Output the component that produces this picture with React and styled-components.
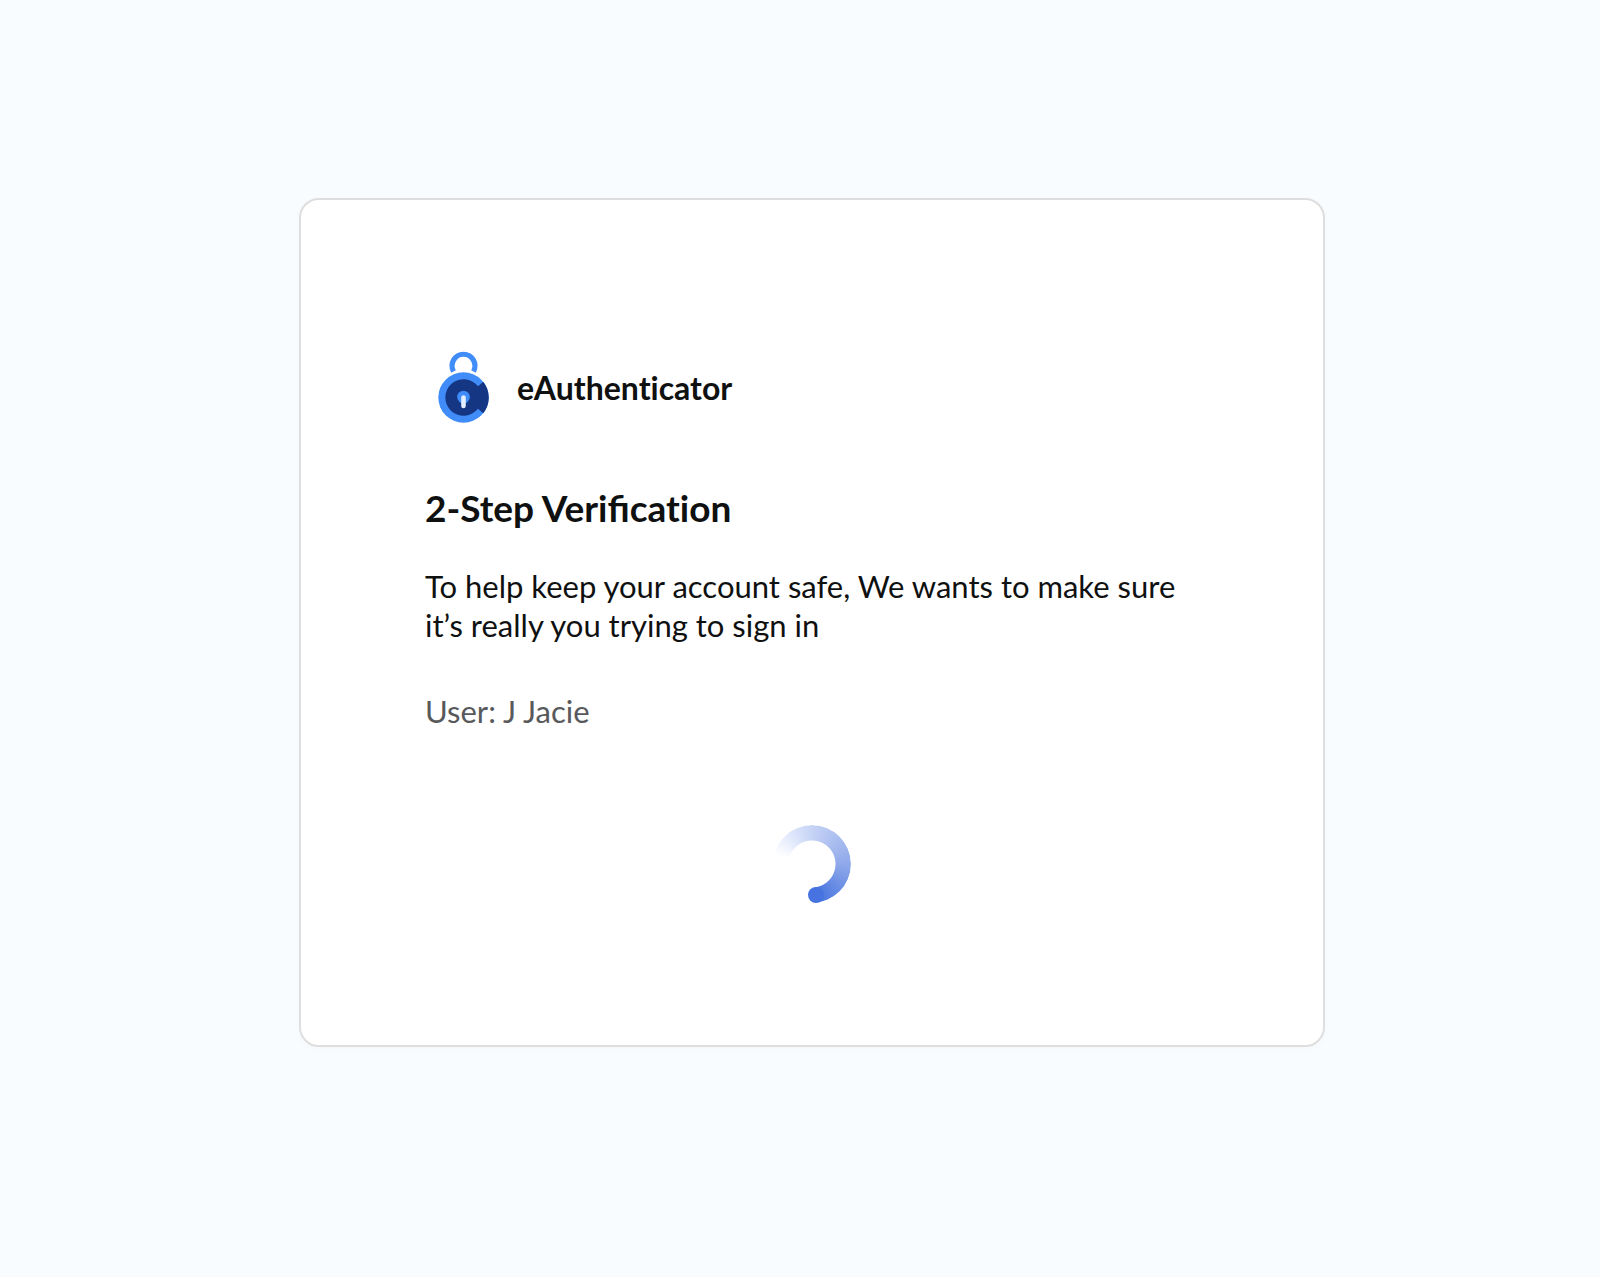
import React from "react";
import styled, { createGlobalStyle } from "styled-components";

const GlobalStyle = createGlobalStyle`
  *, *::before, *::after { box-sizing: border-box; }
  body {
    margin: 0;
    background: #f9fcff;
    font-family: Lato, "Open Sans", sans-serif;
    color: #0f1111;
  }
  h1, p { margin: 0; }
`;

const Page = styled.div`
  display: grid;
  grid-template-columns: 299fr minmax(0, 1026px) 275fr;
  padding: 198px 0;
`;

const Card = styled.main`
  grid-column: 2;
  padding: 144px 124px 142px;
  background: #fff;
  border: 2px solid #dedede;
  border-radius: 20px;
  box-shadow: 0 2px 8px rgba(0, 0, 0, 0.02);
`;

const Brand = styled.header`
  display: flex;
  align-items: center;
  gap: 16px;
  height: 88px;
`;

const BrandMark = styled.svg`
  display: block;
  width: 76px;
  height: 88px;
`;

const BrandName = styled.span`
  font-size: 32px;
  line-height: 38px;
  font-weight: 700;
  font-variant-ligatures: none;
`;

const Title = styled.h1`
  margin-top: 53px;
  font-size: 37px;
  line-height: 46px;
  font-weight: 700;
`;

const Unligated = styled.span`
  font-variant-ligatures: none;
`;

const Text = styled.p`
  margin-top: ${(p) => (p.$muted ? "47px" : "36px")};
  font-size: 31px;
  line-height: 39px;
  color: ${(p) => (p.$muted ? "#58595b" : "#0f1111")};
`;

const Spinner = styled.div`
  position: relative;
  width: 78px;
  height: 78px;
  margin: 94px auto 0;

  &::before {
    content: "";
    display: block;
    height: 100%;
    border-radius: 50%;
    background: conic-gradient(
      from 284deg,
      rgba(68, 114, 222, 0) 0deg,
      #dbe4fa 45deg,
      #c6d3f5 76deg,
      #8fa9ea 166deg,
      #4673df 248deg,
      transparent 248deg
    );
    mask: radial-gradient(circle, transparent 23px, #000 24px);
  }

  &::after {
    content: "";
    position: absolute;
    left: 35px;
    bottom: 0;
    width: 16px;
    height: 16px;
    border-radius: 50%;
    background: #4673df;
  }
`;

function LockMark() {
  return (
    <BrandMark viewBox="0 0 76 88" aria-hidden="true">
      <path d="M28.5 27.4A11.4 11.6 0 1 1 48.5 27.4" fill="none" stroke="#408cf9" strokeWidth="5.2" />
      <circle cx="38.5" cy="53.5" r="25.2" fill="#408cf9" />
      <path
        d="M58.2 37.7A25.2 25.2 0 0 1 58.2 69.3L53 64.8A18.3 18.3 0 1 1 53 42.2Z"
        fill="#153783"
      />
      <circle cx="38.5" cy="53" r="6.3" fill="#408cf9" />
      <path d="M38.5 53.5V62" stroke="#e3efff" strokeWidth="4.6" strokeLinecap="round" />
    </BrandMark>
  );
}

export default function App() {
  return (
    <>
      <GlobalStyle />
      <Page>
        <Card>
          <Brand>
            <LockMark />
            <BrandName>eAuthenticator</BrandName>
          </Brand>
          <Title>
            2-Step Verifi<Unligated>cation</Unligated>
          </Title>
          <Text>
            To help keep your account safe, We wants to make sure it’s really you trying to sign in
          </Text>
          <Text $muted>User: J Jacie</Text>
          <Spinner role="status" aria-label="Loading" />
        </Card>
      </Page>
    </>
  );
}
